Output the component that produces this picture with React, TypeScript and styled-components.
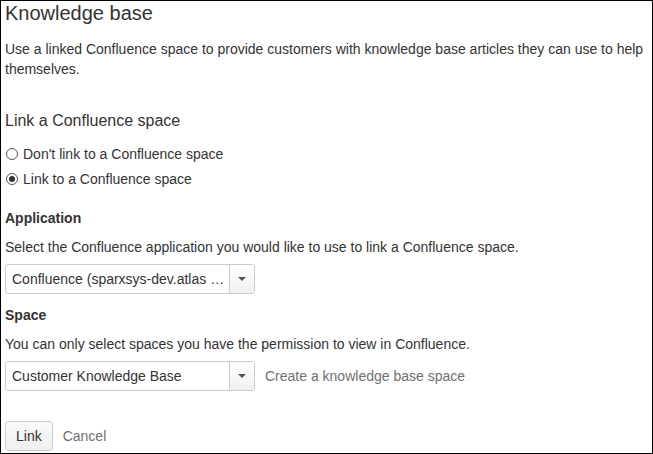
import React from "react";
import styled, { createGlobalStyle } from "styled-components";

const GlobalStyle = createGlobalStyle`
  html, body {
    margin: 0;
    padding: 0;
    background: #ffffff;
  }
  body {
    font-family: "Liberation Sans", Arial, sans-serif;
    color: #333333;
  }
`;

const Page = styled.div`
  box-sizing: border-box;
  width: 653px;
  height: 454px;
  border: 1px solid #000000;
  padding: 0 4px;
  font-size: 14px;
  line-height: 20px;
  overflow: hidden;
`;

const Title = styled.h1`
  margin: 0;
  font-size: 20px;
  font-weight: normal;
  line-height: 24px;
  color: #333333;
`;

const Intro = styled.p`
  margin: 14px 0 0;
`;

const SectionTitle = styled.h2`
  margin: 32px 0 0;
  font-size: 16px;
  font-weight: normal;
  line-height: 20px;
`;

const RadioGroup = styled.div`
  display: flex;
  flex-direction: column;
  gap: 5px;
  margin-top: 13px;
`;

const RadioRow = styled.label`
  display: flex;
  align-items: center;
  height: 20px;
`;

const RadioDot = styled.span<{ $checked?: boolean }>`
  box-sizing: border-box;
  width: 12px;
  height: 12px;
  border-radius: 50%;
  border: 1px solid #555555;
  background: #ffffff;
  margin: 0 5px 0 1px;
  display: flex;
  align-items: center;
  justify-content: center;

  &::after {
    content: "";
    display: ${(p) => (p.$checked ? "block" : "none")};
    width: 6px;
    height: 6px;
    border-radius: 50%;
    background: #333333;
  }
`;

const FieldLabel = styled.div<{ $top: number }>`
  margin-top: ${(p) => p.$top}px;
  font-weight: bold;
`;

const FieldHelp = styled.div`
  margin-top: 9px;
`;

const FieldRow = styled.div`
  display: flex;
  align-items: center;
  margin-top: 7px;
`;

const Select = styled.div`
  box-sizing: border-box;
  display: flex;
  width: 250px;
  height: 30px;
  border: 1px solid #cccccc;
  border-radius: 3px;
  background: #ffffff;
`;

const SelectValue = styled.div`
  flex: 1;
  padding: 0 6px;
  line-height: 28px;
  white-space: nowrap;
  overflow: hidden;
`;

const SelectArrow = styled.div`
  width: 24px;
  border-left: 1px solid #cccccc;
  background: linear-gradient(#ffffff, #f0f0f0);
  border-radius: 0 2px 2px 0;
  display: flex;
  align-items: center;
  justify-content: center;

  &::after {
    content: "";
    border-left: 4px solid transparent;
    border-right: 4px solid transparent;
    border-top: 4px solid #555555;
  }
`;

const SideLink = styled.a`
  margin-left: 10px;
  color: #707070;
  text-decoration: none;
`;

const Actions = styled.div`
  display: flex;
  align-items: center;
  margin-top: 30px;
`;

const Button = styled.button`
  box-sizing: border-box;
  height: 30px;
  padding: 0 10px;
  border: 1px solid #cccccc;
  border-radius: 3px;
  background: linear-gradient(#fafafa, #f0f0f0);
  font-family: inherit;
  font-size: 14px;
  color: #333333;
`;

const CancelLink = styled.a`
  margin-left: 10px;
  color: #707070;
  text-decoration: none;
`;

export default function App() {
  return (
    <>
      <GlobalStyle />
      <Page>
        <Title>Knowledge base</Title>
        <Intro>
          Use a linked Confluence space to provide customers with knowledge base articles they can use
          to help themselves.
        </Intro>

        <SectionTitle>Link a Confluence space</SectionTitle>
        <RadioGroup>
          <RadioRow>
            <RadioDot />
            Don't link to a Confluence space
          </RadioRow>
          <RadioRow>
            <RadioDot $checked />
            Link to a Confluence space
          </RadioRow>
        </RadioGroup>

        <FieldLabel $top={19}>Application</FieldLabel>
        <FieldHelp>Select the Confluence application you would like to use to link a Confluence space.</FieldHelp>
        <FieldRow>
          <Select>
            <SelectValue>Confluence (sparxsys-dev.atlas …</SelectValue>
            <SelectArrow />
          </Select>
        </FieldRow>

        <FieldLabel $top={11}>Space</FieldLabel>
        <FieldHelp>You can only select spaces you have the permission to view in Confluence.</FieldHelp>
        <FieldRow>
          <Select>
            <SelectValue>Customer Knowledge Base</SelectValue>
            <SelectArrow />
          </Select>
          <SideLink href="#">Create a knowledge base space</SideLink>
        </FieldRow>

        <Actions>
          <Button>Link</Button>
          <CancelLink href="#">Cancel</CancelLink>
        </Actions>
      </Page>
    </>
  );
}
